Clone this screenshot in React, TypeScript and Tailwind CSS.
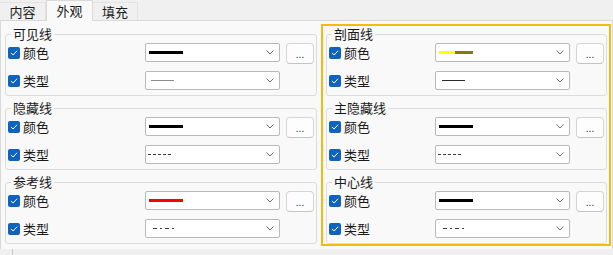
import React from "react";

const FONT = { fontFamily: '"Noto Sans CJK SC", "Noto Sans", sans-serif' };

function Check() {
  return (
    <div className="w-[12px] h-[12px] rounded-[2px] bg-[#0f62c0] flex items-center justify-center shrink-0">
      <svg width="8" height="8" viewBox="0 0 8 8" fill="none">
        <path d="M1.2 4.2 L3.1 6 L6.8 2" stroke="#fff" strokeWidth="1" strokeLinecap="round" strokeLinejoin="round" />
      </svg>
    </div>
  );
}

function Chevron() {
  return (
    <svg width="8" height="5" viewBox="0 0 8 5" fill="none" className="shrink-0">
      <path d="M0.5 0.5 L4 4 L7.5 0.5" stroke="#6b6b6b" strokeWidth="1" />
    </svg>
  );
}

function Combo({ children }: { children: React.ReactNode }) {
  return (
    <div className="w-[135px] h-[19px] bg-white border border-[#b9b9b9] rounded-[2px] flex items-center pr-[5px]">
      <div className="flex-1 flex items-center">{children}</div>
      <Chevron />
    </div>
  );
}

function Dots() {
  return (
    <div className="ml-[6px] w-[28px] h-[21px] bg-[#fdfdfd] border border-[#d5d5d5] border-b-[#c4c4c4] rounded-[4px] flex justify-center items-end pb-[4px] text-[10px] leading-[10px] text-[#1f2f4a]" style={FONT}>
      ...
    </div>
  );
}

type Kind = "thin" | "thinDark" | "dash" | "dashdot";

function TypeSample({ kind }: { kind: Kind }) {
  if (kind === "thin")
    return <div className="w-[23px] h-[1px] bg-[#8a8a8a] ml-[5px]" />;
  if (kind === "thinDark")
    return <div className="w-[23px] h-[1px] bg-[#2a2a2a] ml-[6px]" />;
  if (kind === "dash")
    return (
      <svg width="25" height="3" className="ml-[2px]">
        <line x1="0" y1="1.5" x2="25" y2="1.5" stroke="#3a3a3a" strokeWidth="1" strokeDasharray="3 2" />
      </svg>
    );
  return (
    <svg width="22" height="3" className="ml-[7px]">
      <line x1="0" y1="1.5" x2="22" y2="1.5" stroke="#3a3a3a" strokeWidth="1" strokeDasharray="4 3 2 3" />
    </svg>
  );
}

function ColorSample({ color }: { color: string }) {
  if (color === "yo")
    return (
      <div className="flex ml-[3px]">
        <div className="w-[16px] h-[3px] bg-[#ffff00]" />
        <div className="w-[18px] h-[3px] bg-[#808000]" />
      </div>
    );
  return <div className={`w-[34px] h-[3px] ml-[3px] ${color}`} />;
}

function Label({ text }: { text: string }) {
  return (
    <div className="flex items-center h-[19px]">
      <Check />
      <span className="ml-[3px] text-[13px] leading-[16px] text-[#1a1a1a]">{text}</span>
    </div>
  );
}

function Group({ title, color, kind }: { title: string; color: string; kind: Kind }) {
  return (
    <fieldset className="border border-[#dcdcdc] rounded-[3px] pl-[2px] pr-[2px] pb-[5px] m-0 min-w-0">
      <legend className="ml-[3px] px-[2px] text-[13px] leading-[16px] text-[#1a1a1a]">{title}</legend>
      <div className="flex flex-col gap-[7px] pt-[1px]">
        <div className="flex items-start">
          <Label text="颜色" />
          <div className="ml-auto flex items-start">
            <Combo>
              <ColorSample color={color} />
            </Combo>
            <Dots />
          </div>
        </div>
        <div className="flex items-start">
          <Label text="类型" />
          <div className="ml-auto flex items-start">
            <Combo>
              <TypeSample kind={kind} />
            </Combo>
            <div className="ml-[6px] w-[28px]" />
          </div>
        </div>
      </div>
    </fieldset>
  );
}

export default function App() {
  return (
    <div className="w-[613px] h-[255px] bg-[#f0f0f0] overflow-hidden" style={FONT}>
      <div className="h-[20px] flex items-end relative z-10">
        <div className="w-[46px] h-[18px] bg-[#f0f0f0] border-t border-r border-[#e3e3e3] flex items-center justify-center text-[13px] text-[#1a1a1a]">内容</div>
        <div className="w-[47px] h-[21px] -mb-px bg-[#f9f9f9] border-t border-l border-r border-[#d9d9d9] flex items-center justify-center text-[13px] text-[#1a1a1a]">外观</div>
        <div className="w-[45px] h-[18px] bg-[#f0f0f0] border-t border-r border-[#e3e3e3] flex items-center justify-center text-[13px] text-[#1a1a1a]">填充</div>
      </div>
      <div className="h-[229px] bg-[#f9f9f9] border-t border-l border-r border-[#d9d9d9] flex items-start pt-[3px] pl-[4px]">
        <div className="w-[312px] mt-[2px] flex flex-col gap-[4px]">
          <Group title="可见线" color="bg-black" kind="thin" />
          <Group title="隐藏线" color="bg-black" kind="dash" />
          <Group title="参考线" color="bg-[#ff0000]" kind="dashdot" />
        </div>
        <div className="ml-[4px] border-2 border-[#f7b90d] pl-[3px] pr-[2px] flex flex-col">
          <div className="w-[281px] flex flex-col gap-[4px]">
            <Group title="剖面线" color="yo" kind="thinDark" />
            <Group title="主隐藏线" color="bg-black" kind="dash" />
            <Group title="中心线" color="bg-black" kind="dashdot" />
          </div>
        </div>
      </div>
      <div className="h-[6px] pl-[12px]">
        <div className="h-full border-l border-[#c8c8c8]" />
      </div>
    </div>
  );
}
